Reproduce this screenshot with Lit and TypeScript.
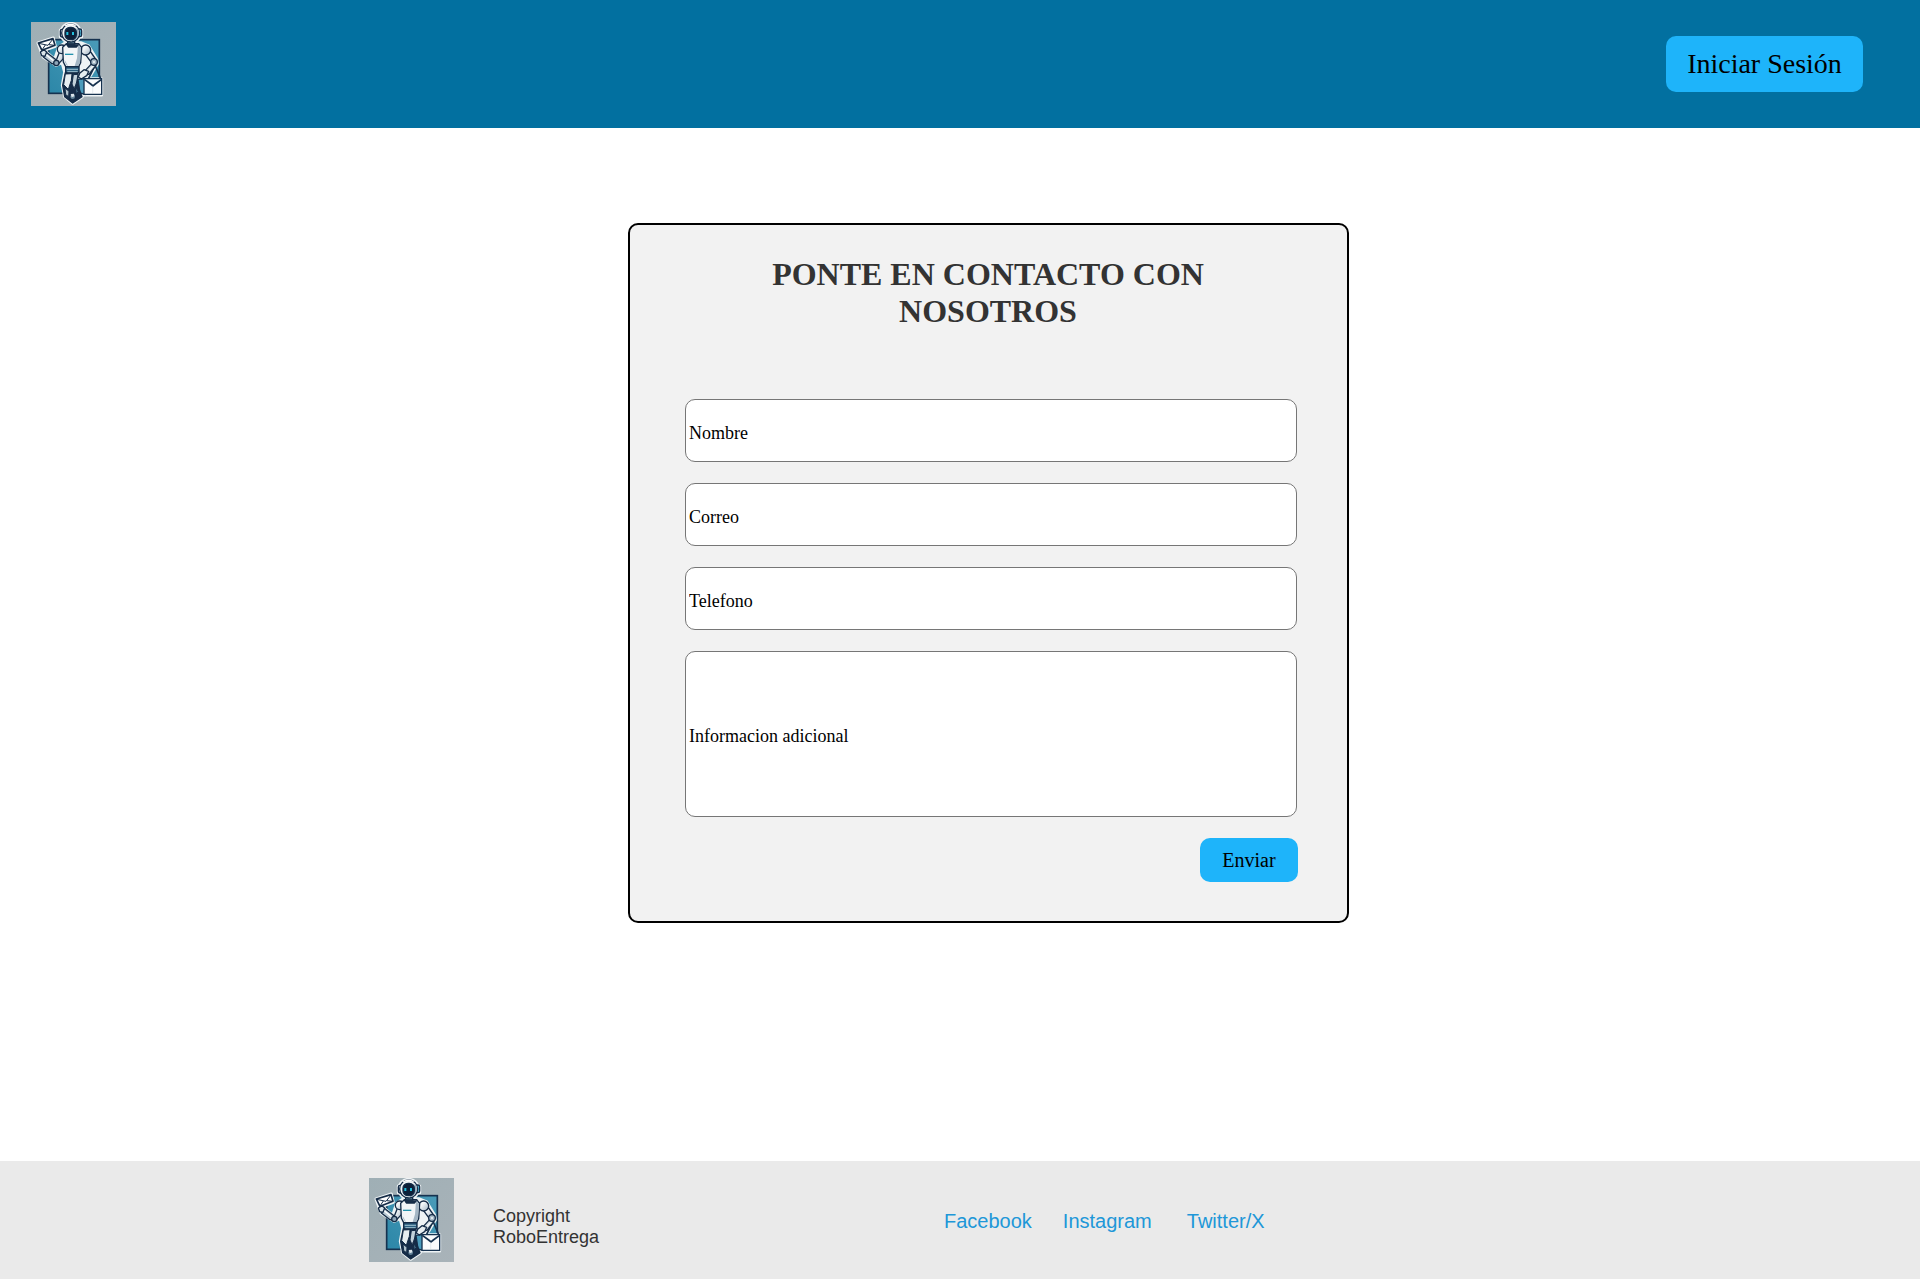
import { LitElement, html, css } from "lit";
import { customElement } from "lit/decorators.js";

@customElement("robo-logo")
class RoboLogo extends LitElement {
  static styles = css`
    :host { display: block; width: 85px; height: 84px; flex: none; }
    svg { display: block; width: 100%; height: 100%; }
  `;
  render() {
    return html`<svg viewBox="33 36 255 252" preserveAspectRatio="none" aria-label="RoboEntrega">
      <defs>
        <linearGradient id="bg" x1="0" y1="0" x2="1" y2="1">
          <stop offset="0" stop-color="#9fafb5" /><stop offset="1" stop-color="#a9b3b9" />
        </linearGradient>
        <linearGradient id="sq" x1="0" y1="1" x2="1" y2="0">
          <stop offset="0" stop-color="#2c87a8" /><stop offset="1" stop-color="#4a9bb8" />
        </linearGradient>
        <linearGradient id="metal" x1="0" y1="0" x2="1" y2="1">
          <stop offset="0.35" stop-color="#f3f6f8" /><stop offset="1" stop-color="#9db0c0" />
        </linearGradient>
      </defs>
      <rect x="33" y="36" width="255" height="252" fill="url(#bg)" />
      <rect x="86" y="89" width="152" height="161" fill="url(#sq)" stroke="#16324f" stroke-width="5" />
      <!-- pale halo behind the figure -->
      <g fill="#eef3f5" stroke="#eef3f5" stroke-width="9" stroke-linejoin="round">
        <path d="M54 99L100 84L106 109L63 124Z" />
        <circle cx="152" cy="69" r="29" />
        <path d="M121 60h64v20h-64Z" />
        <path d="M62 124L74 122L104 148L116 112L136 98L182 98L206 108L230 148L232 162L212 196L186 206L178 236L187 260L158 280L134 260L127 226L134 186L126 158L108 166L70 142Z" />
        <path d="M176 206H245V255H180Z" />
      </g>
      <!-- bag handle and bag -->
      <path d="M226 168L242 206M222 172L206 205" fill="none" stroke="#16324f" stroke-width="5" />
      <path d="M174 208L194 206V253L180 249Z" fill="#4b9bbb" stroke="#16324f" stroke-width="4" />
      <path d="M192 206H245V253H192Z" fill="#fafcfd" stroke="#16324f" stroke-width="4" />
      <path d="M193 208L212 222L219 228L226 222L245 208" fill="none" stroke="#16324f" stroke-width="5" />
      <path d="M218 229V249" stroke="#d8e1e6" stroke-width="2" />
      <!-- lifted arm -->
      <g stroke="#142b46" stroke-width="4" stroke-linejoin="round">
        <path d="M120 122L110 148L104 158L114 163L130 146L134 126Z" fill="url(#metal)" />
        <path d="M68 128L79 127L108 149L106 163L96 161L70 141Z" fill="#bccbd5" />
        <path d="M76 132L102 154" fill="none" stroke="#fff" stroke-width="4" />
        <circle cx="109" cy="159" r="8" fill="#8ea5b7" />
        <path d="M61 126L72 119L80 126L75 139L65 137Z" fill="#dce5e9" />
        <path d="M55 99L99 86L105 106L66 121Z" fill="#fff" stroke-width="5" />
        <path d="M56 100L84 106L99 87M66 120L76 105M104 106L87 104" fill="none" stroke-width="3" />
      </g>
      <!-- hanging arm -->
      <g stroke="#142b46" stroke-width="4" stroke-linejoin="round">
        <path d="M194 130L212 126L226 146L216 160Z" fill="url(#metal)" />
        <path d="M215 161L228 166L208 192L194 196L190 188Z" fill="#ccd8df" />
        <path d="M219 168L200 188" fill="none" stroke="#f8fbfc" />
        <circle cx="222" cy="156" r="10" fill="#a8bac8" />
        <circle cx="222" cy="156" r="3" fill="#f2f7f9" stroke="none" />
        <path d="M179 190L192 179L206 184L200 197L184 207L175 201Z" fill="#e7eef1" />
      </g>
      <!-- legs -->
      <g stroke="#142b46" stroke-width="4" stroke-linejoin="round">
        <path d="M136 188H174L172 214L178 240L186 260L158 279L134 260L128 226Z" fill="#162c48" />
        <path d="M136 192L156 191L154 211L145 238L131 224Z" fill="#e6edf0" stroke-width="3" />
        <path d="M160 194L174 193L170 216L163 238L156 222Z" fill="#c2d1da" stroke-width="3" />
        <path d="M135 234L147 244L146 260L137 254Z" fill="#afc0ca" stroke-width="3" />
        <path d="M165 230L175 244L169 252Z" fill="#49718b" stroke-width="3" />
        <circle cx="158" cy="260" r="9" fill="#648399" />
        <path d="M152 252L162 251L163 259L155 262Z" fill="#dce5eb" stroke="none" />
      </g>
      <!-- torso -->
      <g stroke="#142b46" stroke-width="4" stroke-linejoin="round">
        <path d="M137 170H177V188H137Z" fill="#2b5f80" />
        <path d="M140 178H174M142 185H173" stroke="#9fc0cf" stroke-width="3" />
        <circle cx="125" cy="118" r="13" fill="url(#metal)" />
        <circle cx="197" cy="120" r="15" fill="url(#metal)" />
        <path d="M128 112L139 101L176 101L185 113L182 158L176 170L137 170L130 156Z" fill="#f2f5f7" />
        <path d="M174 104L183 113L180 158L174 168L164 168L171 145Z" fill="#a4b6c4" stroke="none" />
        <path d="M139 102L145 111H169L176 103" fill="#172e48" />
        <path d="M135 133H160" stroke="#2593ad" stroke-width="4" />
        <path d="M134 152L142 167" fill="none" stroke="#aabcc8" stroke-width="3" />
      </g>
      <!-- head -->
      <g stroke="#142b46" stroke-width="4">
        <path d="M143 91H164V102H143Z" fill="#56788b" />
        <rect x="121" y="58" width="12" height="23" rx="5" fill="#edf2f4" />
        <rect x="172" y="57" width="13" height="23" rx="5" fill="#48a8c7" />
        <circle cx="152" cy="69" r="27" fill="#f1f5f6" />
        <path d="M171 52Q184 72 166 90L153 95L164 78Z" fill="#91a9ba" stroke="none" />
        <rect x="135" y="52" width="34" height="37" rx="15" fill="#0c1f38" />
        <path d="M135 48Q151 38 167 47" fill="none" stroke="#fff" stroke-width="4" />
        <path d="M142 66V75M159 66V75" stroke="#23bfdc" stroke-width="6" />
      </g>
    </svg>`;
  }
}

@customElement("app-root")
class AppRoot extends LitElement {
  static styles = css`
    * { box-sizing: border-box; }
    :host {
      display: flex; flex-direction: column; height: 1279px; background: #fff;
      font-family: "Liberation Serif", "Times New Roman", serif; color: #000;
    }
    .header {
      height: 128px; flex: none; display: flex; align-items: center; justify-content: space-between;
      padding: 0 57px 0 31px; background: #0270a0;
    }
    button {
      border: 0; padding: 0; border-radius: 10px; background: #1eb4fa; color: #000;
      font-family: inherit; text-align: center;
    }
    .login { width: 197px; height: 56px; font-size: 28px; }
    .main { flex: 1; display: flex; flex-direction: column; align-items: flex-start; padding: 95px 0 0 628px; }
    .card {
      width: 721px; height: 700px; border: 2px solid #000; border-radius: 10px; background: #f2f2f2;
      padding: 31px 49px 0 55px; display: flex; flex-direction: column;
    }
    h1 {
      margin: 0 0 69px 53px; width: 500px; font-size: 32px; line-height: 37px; text-align: center; color: #333;
    }
    .form { display: flex; flex-direction: column; gap: 21px; width: 613px; }
    input {
      display: block; width: 612px; height: 63px; border: 1px solid #767676; border-radius: 10px; background: #fff;
      padding: 6px 2px 0 3px; font-family: inherit; font-size: 18px; outline: 0;
    }
    input::placeholder { color: #000; opacity: 1; }
    .tall { height: 166px; padding-top: 4px; }
    .send { width: 98px; height: 44px; font-size: 20px; align-self: flex-end; }
    .footer {
      height: 118px; flex: none; display: flex; align-items: center; background: #eaeaea; padding-left: 369px;
      font-family: "Liberation Sans", Arial, sans-serif;
    }
    .copy { margin: 13px 0 0 39px; width: 150px; font-size: 18px; line-height: 21px; color: #333; }
    .links { display: flex; margin: 2px 0 0 301px; }
    a { color: #2097d8; font-size: 20px; line-height: 23px; text-decoration: none; }
    .insta { margin-left: 31px; }
    .twitter { margin-left: 35px; }
  `;
  render() {
    return html`
      <header class="header">
        <robo-logo></robo-logo>
        <button class="login">Iniciar Sesión</button>
      </header>
      <main class="main">
        <section class="card">
          <h1>PONTE EN CONTACTO CON NOSOTROS</h1>
          <div class="form">
            <input placeholder="Nombre" />
            <input placeholder="Correo" />
            <input placeholder="Telefono" />
            <input class="tall" placeholder="Informacion adicional" />
            <button class="send">Enviar</button>
          </div>
        </section>
      </main>
      <footer class="footer">
        <robo-logo></robo-logo>
        <div class="copy">Copyright<br />RoboEntrega</div>
        <nav class="links">
          <a>Facebook</a><a class="insta">Instagram</a><a class="twitter">Twitter/X</a>
        </nav>
      </footer>
    `;
  }
}
